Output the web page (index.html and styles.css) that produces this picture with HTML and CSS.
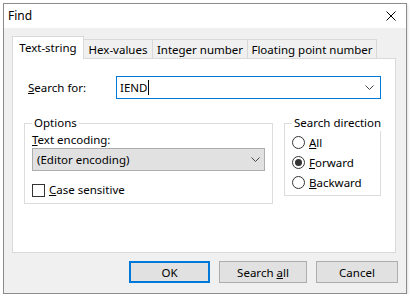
FILE: index.html
```html
<!DOCTYPE html>
<html lang="en">
<head>
    <meta charset="UTF-8">
    <title>Find</title>
    <link rel="stylesheet" href="styles.css">
</head>
<body>
    <div class="window">
        <div class="titlebar">
            <span class="title">Find</span>
            <svg class="close" width="10" height="10" viewBox="0 0 10 10">
                <path d="M0.5 0.5 L9.5 9.5 M9.5 0.5 L0.5 9.5" stroke="#000" stroke-width="1"/>
            </svg>
        </div>

        <div class="client">
            <div class="tabs">
                <div class="tab active">Text-string</div>
                <div class="tab tab-hex">Hex-values</div>
                <div class="tab tab-int">Integer number</div>
                <div class="tab tab-float">Floating point number</div>
            </div>

            <div class="panel">
                <div class="search-row">
                    <label class="search-label"><u>S</u>earch for:</label>
                    <div class="combo">
                        <span class="combo-text">IEND</span><span class="caret"></span>
                        <svg class="chevron" width="9" height="5" viewBox="0 0 9 5">
                            <path d="M0.5 0.5 L4.5 4.5 L8.5 0.5" fill="none" stroke="#444" stroke-width="1"/>
                        </svg>
                    </div>
                </div>

                <div class="groups">
                    <fieldset class="group options">
                        <legend>Options</legend>
                        <div class="field-label"><u>T</u>ext encoding:</div>
                        <div class="select">
                            <span>(Editor encoding)</span>
                            <svg class="chevron" width="9" height="5" viewBox="0 0 9 5">
                                <path d="M0.5 0.5 L4.5 4.5 L8.5 0.5" fill="none" stroke="#444" stroke-width="1"/>
                            </svg>
                        </div>
                        <div class="check-row">
                            <span class="checkbox"></span>
                            <span><u>C</u>ase sensitive</span>
                        </div>
                    </fieldset>

                    <fieldset class="group direction">
                        <legend>Search direction</legend>
                        <div class="radio-row"><span class="radio"></span><span><u>A</u>ll</span></div>
                        <div class="radio-row"><span class="radio checked"></span><span><u>F</u>orward</span></div>
                        <div class="radio-row"><span class="radio"></span><span><u>B</u>ackward</span></div>
                    </fieldset>
                </div>
            </div>

            <div class="buttons">
                <button class="btn btn-ok">OK</button>
                <button class="btn btn-all">Search <u>a</u>ll</button>
                <button class="btn btn-cancel">Cancel</button>
            </div>
        </div>
    </div>
</body>
</html>
```

FILE: styles.css
```css
* {
    box-sizing: border-box;
}

body {
    margin: 0;
    background-color: #fff;
    font-family: "Segoe UI", "Noto Sans", sans-serif;
    font-size: 11.5px;
    color: #000;
}

.window {
    margin: 3px 0 0 3px;
    width: 404px;
    height: 291px;
    border: 1px solid #8c8c8c;
    background-color: #f0f0f0;
    display: flex;
    flex-direction: column;
    box-shadow: 1px 1px 2px rgba(0, 0, 0, 0.12);
}

.titlebar {
    height: 24px;
    background-color: #fff;
    display: flex;
    align-items: center;
    justify-content: space-between;
    padding: 0 10px 0 4px;
    font-size: 12px;
}

.title {
    line-height: 16px;
}

.close {
    display: block;
}

.client {
    flex: 1;
    padding: 8px 8px 0 8px;
}

.tabs {
    display: flex;
    align-items: flex-end;
    height: 22px;
}

.tab {
    height: 19px;
    line-height: 19px;
    text-align: center;
    background-color: #f0f0f0;
    border-top: 1px solid #d9d9d9;
    border-right: 1px solid #d9d9d9;
    white-space: nowrap;
}

.tab.active {
    position: relative;
    z-index: 1;
    width: 72px;
    height: 23px;
    line-height: 21px;
    margin-bottom: -1px;
    background-color: #fff;
    border-left: 1px solid #d9d9d9;
}

.tab-hex {
    width: 69px;
}

.tab-int {
    width: 95px;
}

.tab-float {
    width: 129px;
}

.panel {
    width: 384px;
    height: 195px;
    background-color: #fff;
    border: 1px solid #d9d9d9;
    padding: 17px 0 0 15px;
}

.search-row {
    display: flex;
    align-items: center;
}

.search-label {
    width: 88px;
}

.combo {
    width: 265px;
    height: 23px;
    border: 1px solid #0078d7;
    display: flex;
    align-items: center;
    padding: 0 6px 0 3px;
}

.combo-text {
    line-height: 16px;
}

.caret {
    width: 1px;
    height: 15px;
    background-color: #000;
    margin-left: 1px;
}

.combo .chevron {
    margin-left: auto;
}

.groups {
    display: flex;
    align-items: flex-start;
    gap: 11px;
    margin: 16px 0 0 -4px;
}

.group {
    margin: 0;
    min-width: 0;
    border: 1px solid #dcdcdc;
    padding: 1px 7px 5px 7px;
}

.group legend {
    padding: 0 2px;
    line-height: 16px;
    white-space: nowrap;
}

.options {
    width: 249px;
}

.direction {
    width: 97px;
    padding-bottom: 3px;
}

.field-label {
    line-height: 16px;
}

.select {
    height: 23px;
    background-color: #e1e1e1;
    border: 1px solid #adadad;
    display: flex;
    align-items: center;
    justify-content: space-between;
    padding: 0 4px 0 4px;
}

.check-row {
    display: flex;
    align-items: center;
    gap: 4px;
    margin-top: 11px;
    line-height: 16px;
}

.checkbox {
    width: 13px;
    height: 13px;
    border: 1px solid #333;
    background-color: #fff;
}

.radio-row {
    display: flex;
    align-items: center;
    gap: 4px;
    height: 20px;
}

.radio {
    width: 13px;
    height: 13px;
    border: 1px solid #333;
    border-radius: 50%;
    background-color: #fff;
    display: flex;
    align-items: center;
    justify-content: center;
}

.radio.checked::after {
    content: "";
    width: 7px;
    height: 7px;
    border-radius: 50%;
    background-color: #333;
}

.buttons {
    display: flex;
    justify-content: flex-end;
    gap: 9px;
    margin-top: 8px;
}

.btn {
    height: 22px;
    font-family: inherit;
    font-size: 11.5px;
    color: #000;
    background-color: #e1e1e1;
    border: 1px solid #adadad;
    padding: 0;
}

.btn-ok {
    width: 81px;
    border: 2px solid #0078d7;
}

.btn-all {
    width: 88px;
}

.btn-cancel {
    width: 82px;
}
```
